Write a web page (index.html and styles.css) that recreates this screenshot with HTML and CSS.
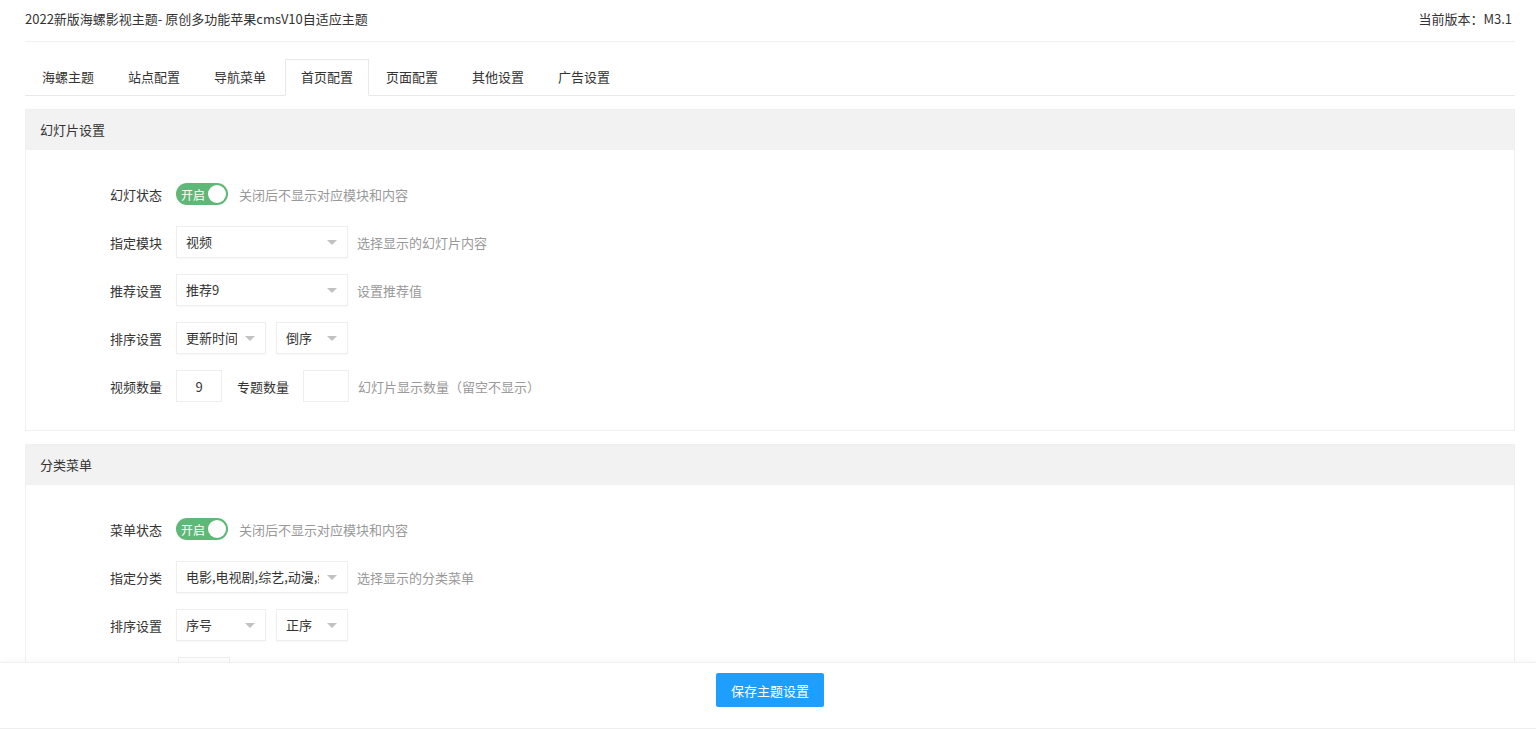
FILE: index.html
```html
<!DOCTYPE HTML>
<html lang=zh-CN>
  <head>
    <meta charset=utf-8>
    <title>主题设置</title>
    <meta name=viewport content=width=device-width,initial-scale=1>
    <link rel="stylesheet" href="styles.css">
  </head>
  <body>
    <div class=main>
      <div class=top>
        <span>2022新版海螺影视主题- 原创多功能苹果cmsV10自适应主题</span>
        <span class=ver>当前版本：M3.1</span>
      </div>

      <ul class=tabs>
        <li>海螺主题</li>
        <li>站点配置</li>
        <li>导航菜单</li>
        <li class=active>首页配置</li>
        <li>页面配置</li>
        <li>其他设置</li>
        <li>广告设置</li>
      </ul>

      <div class=card>
        <div class=card-head>幻灯片设置</div>
        <div class=card-body>
          <div class=row>
            <label class=lbl>幻灯状态</label>
            <span class=switch><span>开启</span><i></i></span>
            <span class="hint after-switch">关闭后不显示对应模块和内容</span>
          </div>
          <div class=row>
            <label class=lbl>指定模块</label>
            <div class="select w172"><span>视频</span><b></b></div>
            <span class=hint>选择显示的幻灯片内容</span>
          </div>
          <div class=row>
            <label class=lbl>推荐设置</label>
            <div class="select w172"><span>推荐9</span><b></b></div>
            <span class=hint>设置推荐值</span>
          </div>
          <div class=row>
            <label class=lbl>排序设置</label>
            <div class="select w90"><span>更新时间</span><b></b></div>
            <div class="select w72"><span>倒序</span><b></b></div>
          </div>
          <div class=row>
            <label class=lbl>视频数量</label>
            <input class=num type=text value=9>
            <label class=lbl-inline>专题数量</label>
            <input class=num type=text value="">
            <span class=hint>幻灯片显示数量（留空不显示）</span>
          </div>
        </div>
      </div>

      <div class=card>
        <div class=card-head>分类菜单</div>
        <div class=card-body>
          <div class=row>
            <label class=lbl>菜单状态</label>
            <span class=switch><span>开启</span><i></i></span>
            <span class="hint after-switch">关闭后不显示对应模块和内容</span>
          </div>
          <div class=row>
            <label class=lbl>指定分类</label>
            <div class="select w172"><span>电影,电视剧,综艺,动漫,纪录片</span><b></b></div>
            <span class=hint>选择显示的分类菜单</span>
          </div>
          <div class=row>
            <label class=lbl>排序设置</label>
            <div class="select w90"><span>序号</span><b></b></div>
            <div class="select w72"><span>正序</span><b></b></div>
          </div>
          <div class="row peek">
            <input class="num w52" type=text value="">
          </div>
        </div>
      </div>
    </div>

    <div class=footer>
      <button class=save type=button>保存主题设置</button>
    </div>
  </body>
</html>
```

FILE: styles.css
```css
html, body {
  margin: 0;
  height: 100%;
}
body {
  font-family: "Noto Sans CJK SC", "Noto Sans", sans-serif;
  font-size: 13px;
  color: #333;
  display: flex;
  flex-direction: column;
  overflow: hidden;
  background: #fff;
}
.main {
  flex: 1;
  overflow: hidden;
  padding: 0 21px 0 25px;
}
.top {
  display: flex;
  justify-content: space-between;
  height: 41px;
  line-height: 37px;
  border-bottom: 1px solid #f0f0f0;
}
.top .ver {
  padding-right: 3px;
}
.tabs {
  display: flex;
  margin: 17px 0 0;
  padding: 0;
  height: 36px;
  border-bottom: 1px solid #e8e8e8;
}
.tabs li {
  list-style: none;
  width: 86px;
  height: 36px;
  line-height: 36px;
  text-align: center;
  box-sizing: border-box;
}
.tabs li.active {
  height: 37px;
  margin-left: 2px;
  width: 84px;
  background: #fff;
  border: 1px solid #e8e8e8;
  border-bottom-color: #fff;
  line-height: 34px;
}
.card {
  margin-top: 13px;
  border: 1px solid #f0f0f0;
}
.card + .card {
  margin-top: 13px;
}
.card-head {
  height: 40px;
  line-height: 40px;
  padding-left: 14px;
  background: #f2f2f2;
}
.card-body {
  padding: 28px 0 12px;
}
.row {
  display: flex;
  align-items: center;
  height: 32px;
  margin-bottom: 16px;
}
.row.peek {
  padding-left: 152px;
}
.lbl {
  width: 150px;
  padding-right: 14px;
  box-sizing: border-box;
  text-align: right;
  flex: none;
}
.lbl-inline {
  margin: 0 14px 0 15px;
}
.switch {
  display: inline-flex;
  align-items: center;
  justify-content: space-between;
  width: 52px;
  height: 22px;
  box-sizing: border-box;
  padding: 0 2px 0 5px;
  border-radius: 11px;
  background: #5fb878;
  color: #fff;
  font-size: 12px;
}
.switch i {
  width: 18px;
  height: 18px;
  border-radius: 50%;
  background: #fff;
}
.hint {
  color: #999;
  margin-left: 9px;
}
.hint.after-switch {
  margin-left: 11px;
}
.select {
  position: relative;
  height: 32px;
  line-height: 30px;
  box-sizing: border-box;
  border: 1px solid #eee;
  padding: 0 28px 0 9px;
  white-space: nowrap;
  box-shadow: 0 1px 2px rgba(0,0,0,.03);
}
.select span {
  display: block;
  overflow: hidden;
}
.select + .select {
  margin-left: 10px;
}
.select b {
  position: absolute;
  right: 10px;
  top: 13px;
  width: 0;
  height: 0;
  border-left: 5px solid transparent;
  border-right: 5px solid transparent;
  border-top: 5px solid #c2c2c2;
}
.w172 { width: 172px; }
.w90 { width: 90px; }
.w72 { width: 72px; }
.num {
  width: 46px;
  height: 32px;
  box-sizing: border-box;
  border: 1px solid #eee;
  text-align: center;
  font: inherit;
  color: #333;
  padding: 0;
  outline: none;
}
.num.w52 {
  width: 52px;
}
.footer {
  flex: none;
  height: 67px;
  box-sizing: border-box;
  padding: 10px 0 0 4px;
  border-top: 1px solid #f0f0f0;
  border-bottom: 1px solid #eee;
  text-align: center;
  box-shadow: 0 -2px 6px rgba(0,0,0,.03);
}
.save {
  width: 108px;
  height: 34px;
  border: none;
  border-radius: 2px;
  background: #1e9fff;
  color: #fff;
  font: inherit;
  font-size: 13px;
}
```
